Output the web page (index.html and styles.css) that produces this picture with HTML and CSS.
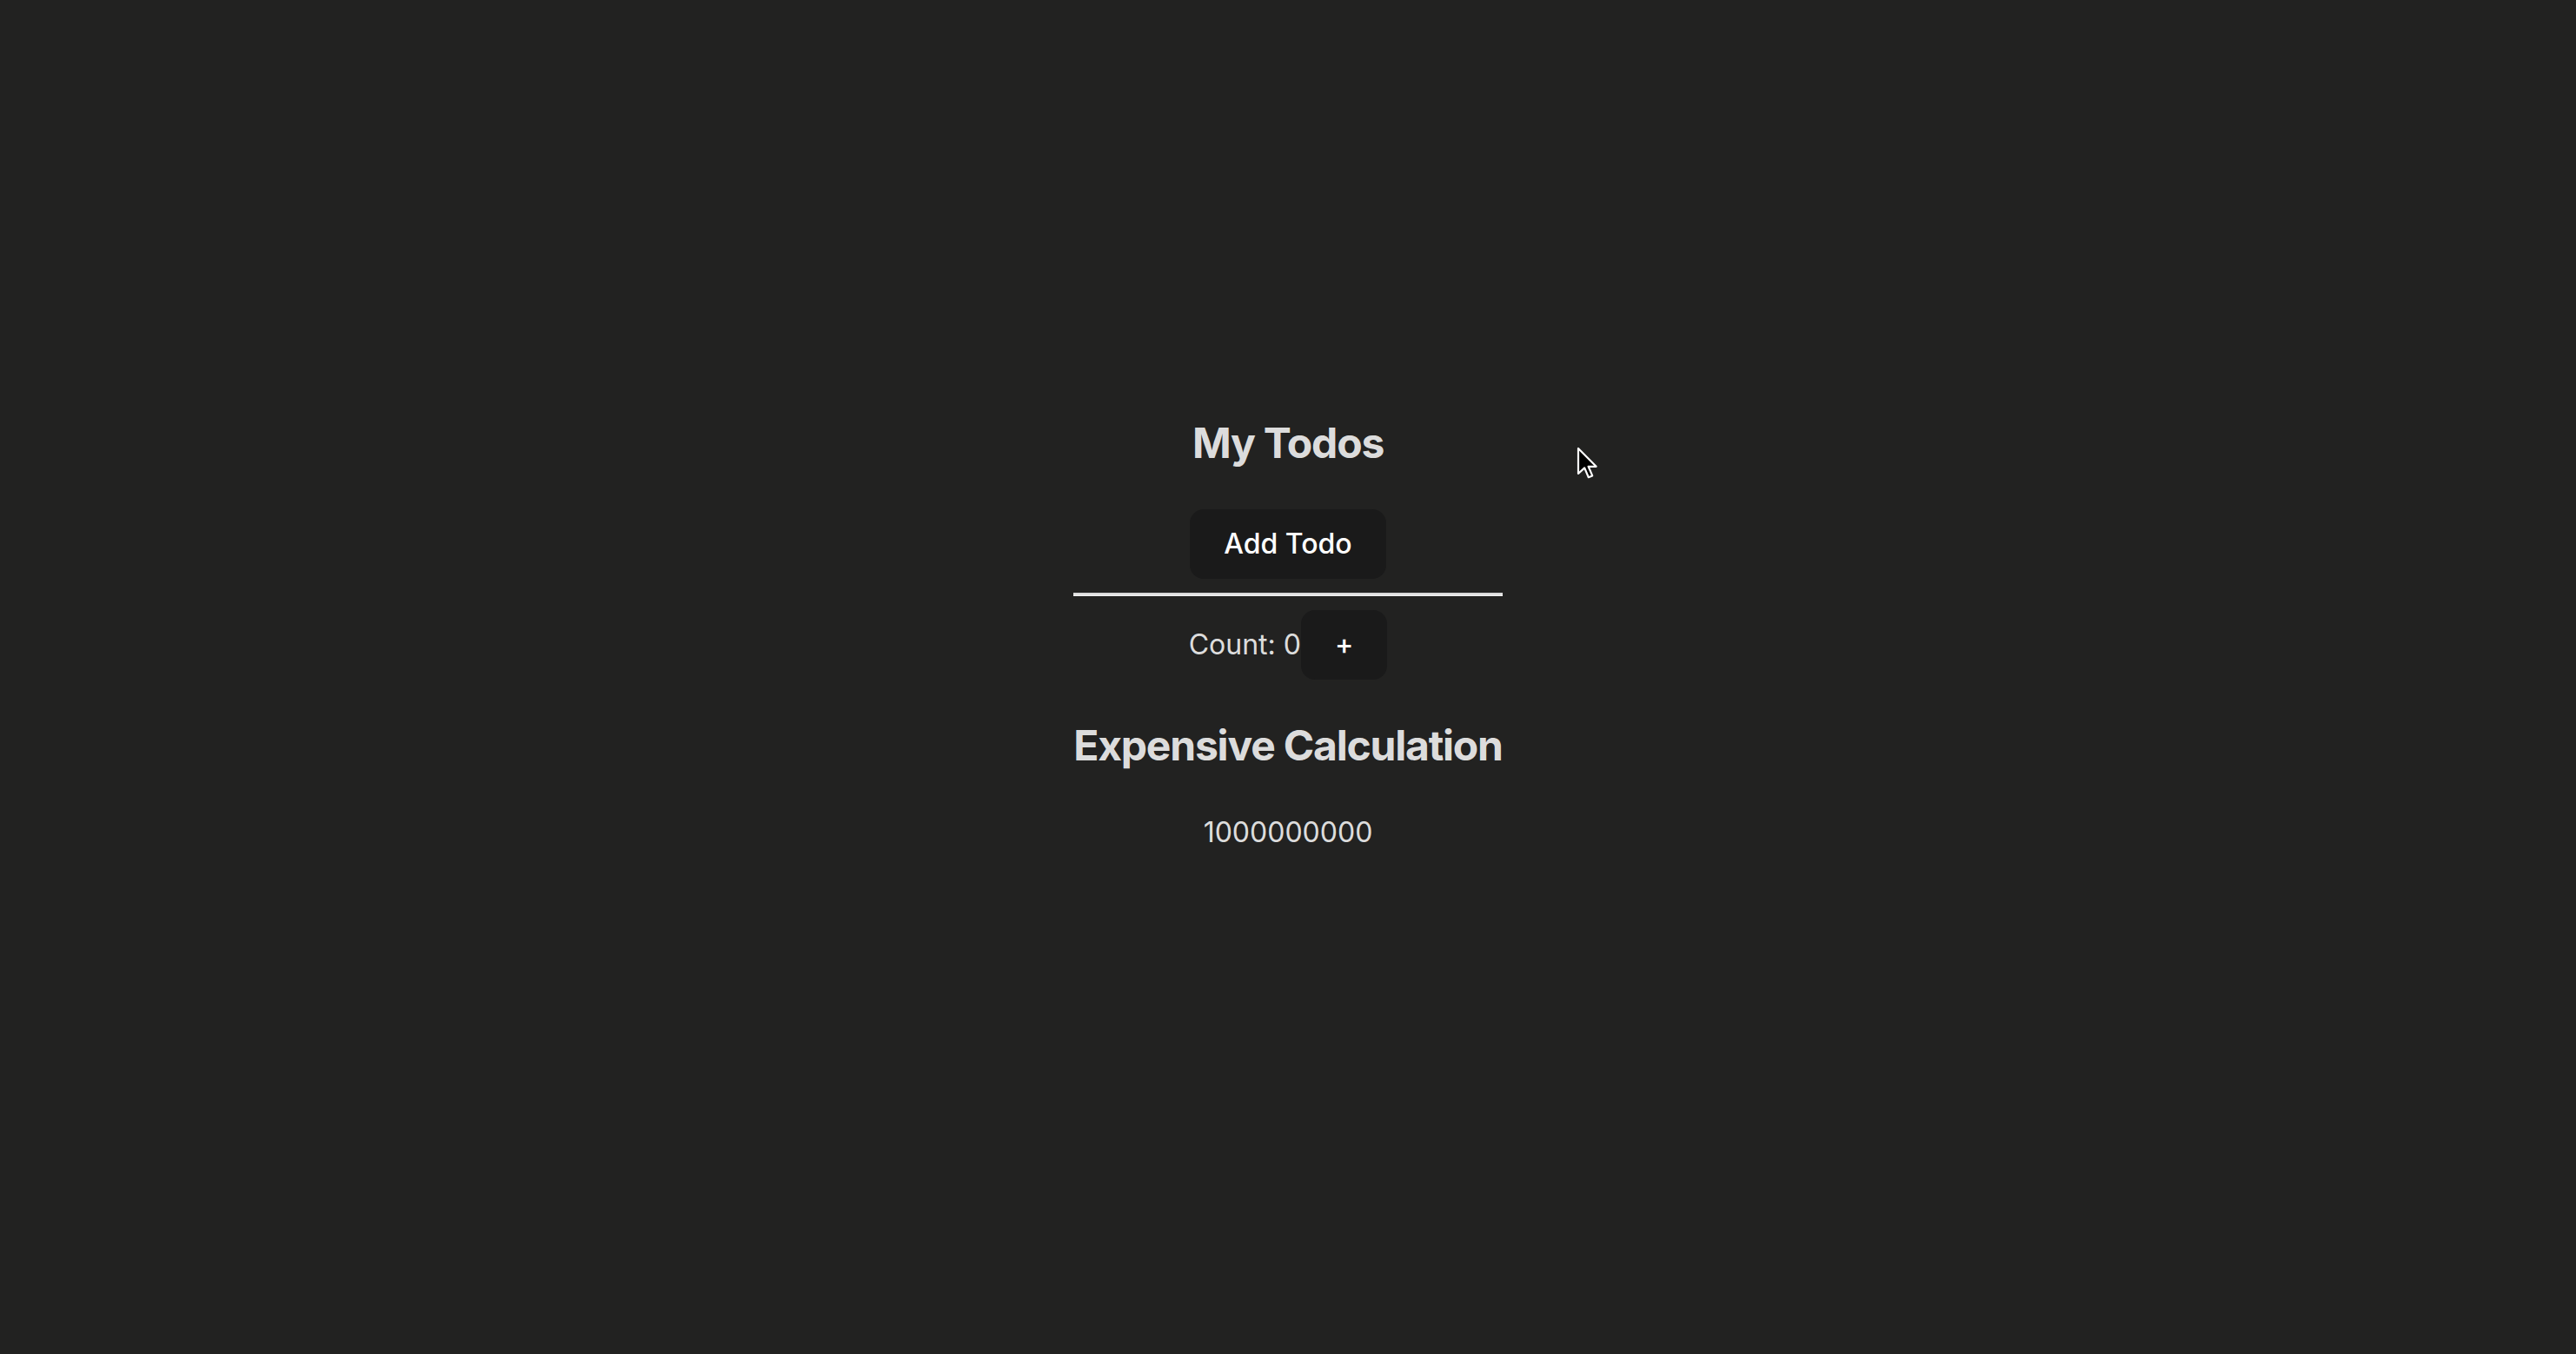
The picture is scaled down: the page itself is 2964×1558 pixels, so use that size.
FILE: index.html
```html
<!DOCTYPE html>
<html lang="en">
<head>
<meta charset="UTF-8">
<title>My Todos</title>
<link rel="stylesheet" href="styles.css">
</head>
<body>
<div class="root">
  <h2 class="title">My Todos</h2>
  <button class="btn">Add Todo</button>
  <hr class="divider">
  <div class="count-row">Count: 0<button class="btn">+</button></div>
  <h2 class="title">Expensive Calculation</h2>
  <p class="result">1000000000</p>
</div>
<svg class="cursor" width="24" height="38" viewBox="0 0 12 19" aria-hidden="true">
  <path d="M1 1 L1 15.5 L4.6 12.2 L6.9 17.6 L9.1 16.7 L6.8 11.4 L11.3 11.4 Z" fill="#000" stroke="#fff" stroke-width="1.1" stroke-linejoin="round"/>
</svg>
</body>
</html>
```

FILE: styles.css
```css
html, body {
  margin: 0;
  padding: 0;
}

body {
  min-height: 100vh;
  background: #222221;
  color: rgba(255, 255, 255, 0.87);
  font-family: Inter, "Noto Sans", "Liberation Sans", sans-serif;
  font-size: 32px;
  line-height: 1.5;
  font-weight: 400;
  display: flex;
  justify-content: center;
  align-items: flex-start;
  padding-top: 370px;
  box-sizing: border-box;
  -webkit-font-smoothing: antialiased;
}

.root {
  padding: 64px;
  text-align: center;
}

.title {
  font-size: 48px;
  font-weight: 700;
  line-height: 72px;
  letter-spacing: -1.2px;
  margin: 40px 0;
  color: rgba(255, 255, 255, 0.87);
}

.btn {
  border-radius: 16px;
  border: 1px solid transparent;
  padding: 19px 38px;
  font-size: 32px;
  font-weight: 500;
  line-height: 40px;
  font-family: inherit;
  background-color: #1a1a1a;
  color: #ffffff;
  cursor: pointer;
}

.divider {
  margin: 16px 0;
  height: 0;
  border: none;
  border-top: 2px solid #d8d8d8;
  border-bottom: 2px solid #ececec;
}

.count-row {
  line-height: 48px;
}

.result {
  margin: 32px 0;
  line-height: 48px;
}

.cursor {
  position: absolute;
  left: 1814px;
  top: 514px;
}
```
